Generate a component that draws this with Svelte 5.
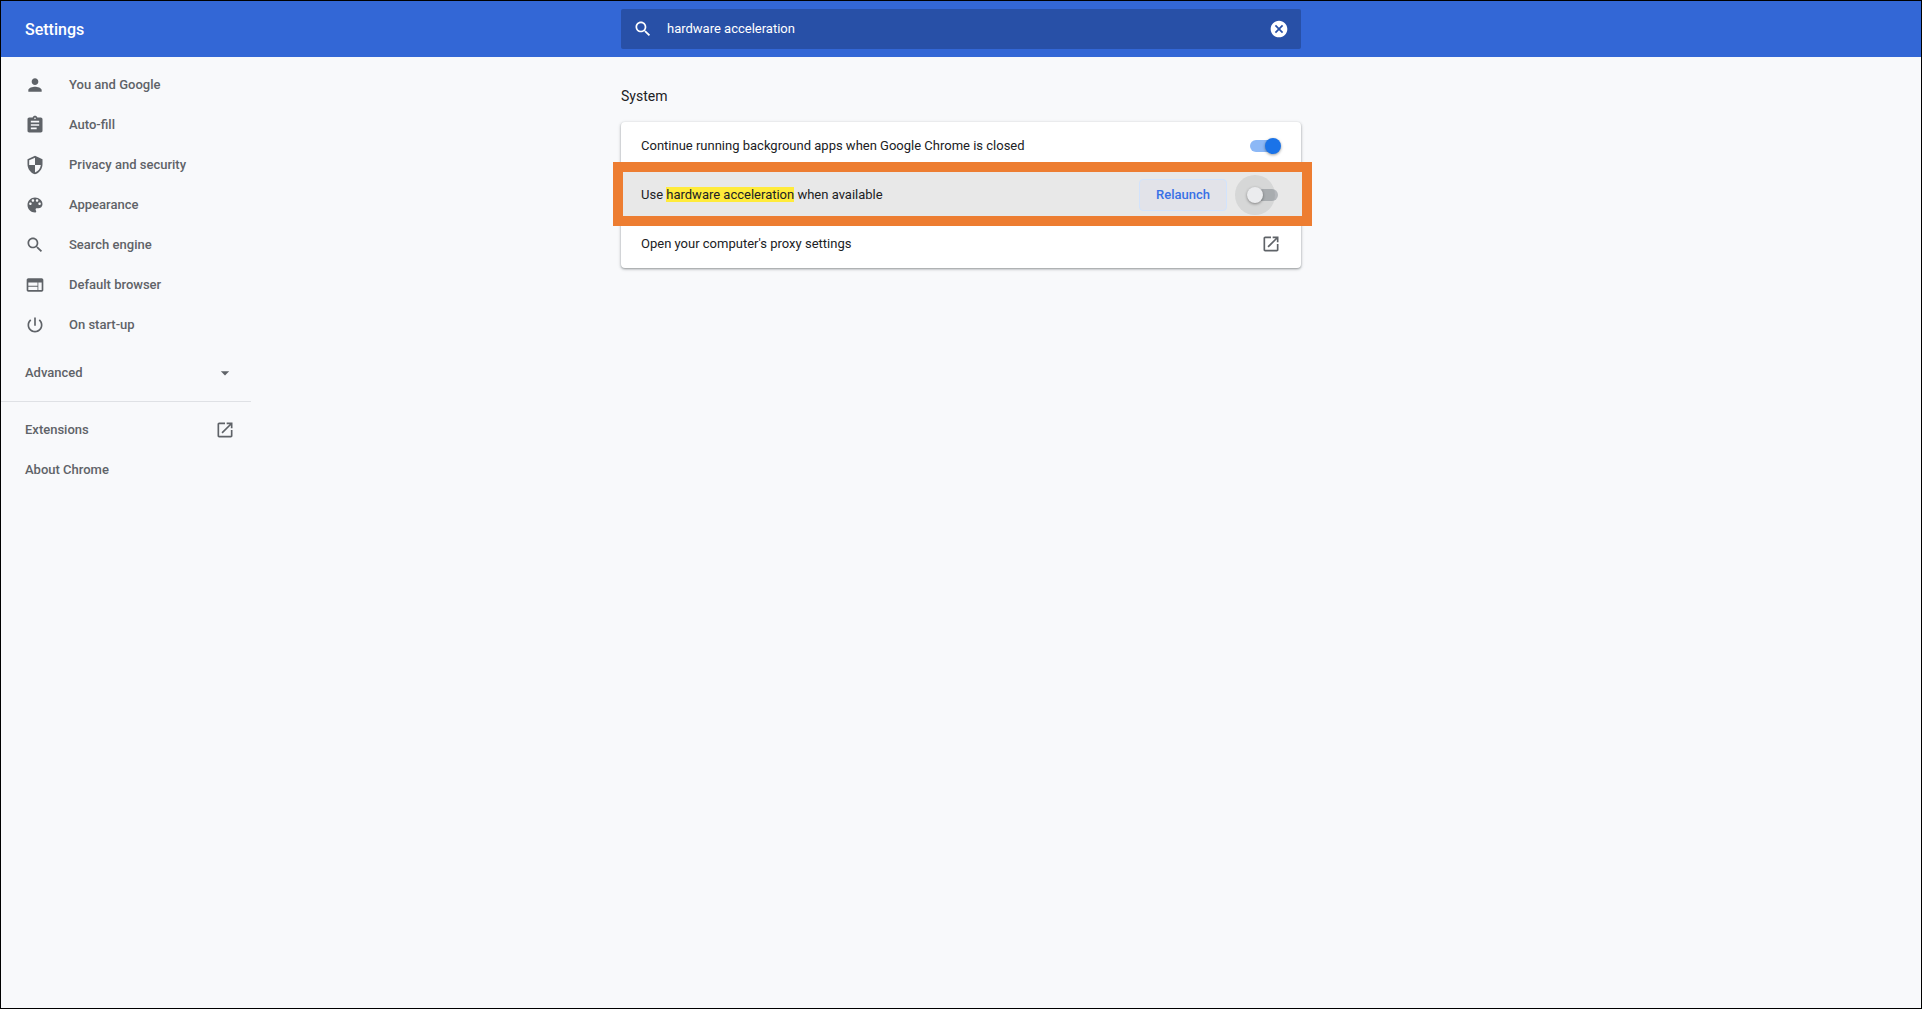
<script>
  const openPath =
    'M19 19H5V5h7V3H5c-1.11 0-2 .9-2 2v14c0 1.1.89 2 2 2h14c1.1 0 2-.9 2-2v-7h-2v7zM14 3v2h3.59l-9.83 9.83 1.41 1.41L19 6.41V10h2V3h-7z';
  const searchPath =
    'M15.5 14h-.79l-.28-.27C15.41 12.59 16 11.11 16 9.5 16 5.91 13.09 3 9.5 3S3 5.91 3 9.5 5.91 16 9.5 16c1.61 0 3.09-.59 4.23-1.57l.27.28v.79l5 4.99L20.49 19l-4.99-5zm-6 0C7.01 14 5 11.99 5 9.5S7.01 5 9.5 5 14 7.01 14 9.5 11.99 14 9.5 14z';

  const sections = [
    {
      label: 'You and Google',
      path: 'M12 12c2.21 0 4-1.79 4-4s-1.79-4-4-4-4 1.79-4 4 1.79 4 4 4zm0 2c-2.67 0-8 1.34-8 4v2h16v-2c0-2.66-5.33-4-8-4z'
    },
    {
      label: 'Auto-fill',
      path: 'M19 3h-4.18C14.4 1.84 13.3 1 12 1c-1.3 0-2.4.84-2.82 2H5c-1.1 0-2 .9-2 2v14c0 1.1.9 2 2 2h14c1.1 0 2-.9 2-2V5c0-1.1-.9-2-2-2zm-7 0c.55 0 1 .45 1 1s-.45 1-1 1-1-.45-1-1 .45-1 1-1zm2 14H7v-2h7v2zm3-4H7v-2h10v2zm0-4H7V7h10v2z'
    },
    {
      label: 'Privacy and security',
      path: 'M12 1L3 5v6c0 5.55 3.84 10.74 9 12 5.16-1.26 9-6.45 9-12V5l-9-4zm0 10.99h7c-.53 4.12-3.28 7.79-7 8.94V12H5V6.3l7-3.11v8.8z'
    },
    {
      label: 'Appearance',
      path: 'M12 3c-4.97 0-9 4.03-9 9s4.03 9 9 9c.83 0 1.5-.67 1.5-1.5 0-.39-.15-.74-.39-1.01-.23-.26-.38-.61-.38-.99 0-.83.67-1.5 1.5-1.5H16c2.76 0 5-2.24 5-5 0-4.42-4.03-8-9-8zm-5.5 9c-.83 0-1.5-.67-1.5-1.5S5.67 9 6.5 9 8 9.67 8 10.5 7.33 12 6.5 12zm3-4C8.67 8 8 7.33 8 6.5S8.67 5 9.5 5s1.5.67 1.5 1.5S10.33 8 9.5 8zm5 0c-.83 0-1.5-.67-1.5-1.5S13.67 5 14.5 5s1.5.67 1.5 1.5S15.33 8 14.5 8zm3 4c-.83 0-1.5-.67-1.5-1.5S16.67 9 17.5 9s1.5.67 1.5 1.5-.67 1.5-1.5 1.5z'
    },
    { label: 'Search engine', path: searchPath },
    {
      label: 'Default browser',
      path: 'M20 4H4c-1.1 0-1.99.9-1.99 2L2 18c0 1.1.9 2 2 2h16c1.1 0 2-.9 2-2V6c0-1.1-.9-2-2-2zm-5 14H4v-4h11v4zm0-5H4V9h11v4zm5 5h-4V9h4v9z'
    },
    {
      label: 'On start-up',
      path: 'M13 3h-2v10h2V3zm4.83 2.17l-1.42 1.42C17.99 7.86 19 9.81 19 12c0 3.87-3.13 7-7 7s-7-3.13-7-7c0-2.19 1.01-4.14 2.58-5.42L6.17 5.17C4.23 6.82 3 9.26 3 12c0 4.97 4.03 9 9 9s9-4.03 9-9c0-2.74-1.23-5.18-3.17-6.83z'
    }
  ];

  let query = $state('hardware acceleration');
  let background = $state(true);
  let acceleration = $state(false);
</script>

{#snippet icon(d)}
  <svg class="icon" viewBox="0 0 24 24" aria-hidden="true"><path {d} /></svg>
{/snippet}

<div class="page">
  <header class="columns toolbar">
    <h1>Settings</h1>
    <div class="search">
      {@render icon(searchPath)}
      <input type="text" aria-label="Search settings" bind:value={query} />
      <button type="button" class="plain" aria-label="Clear search" onclick={() => (query = '')}>
        {@render icon(
          'M12 2C6.47 2 2 6.47 2 12s4.47 10 10 10 10-4.47 10-10S17.53 2 12 2zm5 13.59L15.59 17 12 13.41 8.41 17 7 15.59 10.59 12 7 8.41 8.41 7 12 10.59 15.59 7 17 8.41 13.41 12 17 15.59z'
        )}
      </button>
    </div>
  </header>

  <div class="columns body">
    <nav>
      {#each sections as s}
        <a class="item" href="#settings">{@render icon(s.path)}<span>{s.label}</span></a>
      {/each}
      <button type="button" class="item advanced">
        <span>Advanced</span>{@render icon('M7 10l5 5 5-5z')}
      </button>
      <hr />
      <a class="item spread" href="#extensions"><span>Extensions</span>{@render icon(openPath)}</a>
      <a class="item" href="#about">About Chrome</a>
    </nav>

    <main>
      <h2>System</h2>
      <div class="card">
        <div class="row">
          <label for="background">Continue running background apps when Google Chrome is closed</label>
          <input id="background" class="toggle" type="checkbox" bind:checked={background} />
        </div>
        <div class="row marked">
          <div class="frame"></div>
          <label for="acceleration">Use <mark>hardware acceleration</mark> when available</label>
          <button type="button" class="relaunch">Relaunch</button>
          <input id="acceleration" class="toggle ripple" type="checkbox" bind:checked={acceleration} />
        </div>
        <div class="row">
          <span id="proxy" class="label">Open your computer's proxy settings</span>
          <button type="button" class="plain" aria-labelledby="proxy">{@render icon(openPath)}</button>
        </div>
      </div>
    </main>
  </div>
</div>

<style>
  :global(body) {
    margin: 0;
  }

  .page {
    box-sizing: border-box;
    min-height: 100vh;
    border: 1px solid #000;
    background: #f8f9fb;
    color: #202124;
    font: 13px/20px Roboto, 'Liberation Sans', sans-serif;
  }

  .columns {
    display: grid;
    grid-template-columns: minmax(250px, 1fr) minmax(0, 680px) minmax(0, 1fr);
  }

  .toolbar {
    height: 56px;
    align-items: center;
    background: #3367d6;
    color: #fff;
  }

  h1 {
    margin: 0;
    padding: 2px 0 0 24px;
    font-size: 16px;
    font-weight: 500;
  }

  .icon {
    display: block;
    flex: none;
    width: 20px;
    height: 20px;
    fill: currentColor;
  }

  .search {
    display: flex;
    align-items: center;
    height: 40px;
    box-sizing: border-box;
    padding: 0 12px;
    border-radius: 2px;
    background: #2850a7;
  }

  .search input {
    flex: 1;
    min-width: 0;
    margin: 0;
    padding: 0 14px;
    border: 0;
    outline: 0;
    background: none;
    color: inherit;
    font: inherit;
  }

  .plain {
    padding: 0;
    border: 0;
    background: none;
    color: inherit;
    cursor: pointer;
  }

  nav {
    width: 250px;
    padding-top: 8px;
    color: #5f6368;
    font-weight: 500;
  }

  .item {
    display: flex;
    align-items: center;
    gap: 24px;
    box-sizing: border-box;
    width: 100%;
    height: 40px;
    padding: 0 16px 0 24px;
    border: 0;
    background: none;
    color: inherit;
    font: inherit;
    text-decoration: none;
  }

  .advanced,
  .spread {
    justify-content: space-between;
  }

  .advanced {
    margin-top: 8px;
  }

  hr {
    height: 1px;
    margin: 8px 0;
    border: 0;
    background: #dfe1e5;
  }

  h2 {
    margin: 29px 0 16px;
    font-size: 14px;
    font-weight: 400;
  }

  .card {
    border-radius: 4px;
    background: #fff;
    box-shadow: 0 1px 2px rgba(60, 64, 67, 0.4), 0 1px 3px 1px rgba(60, 64, 67, 0.15);
  }

  .row {
    display: flex;
    align-items: center;
    height: 48px;
    padding: 0 20px;
  }

  .row + .row {
    border-top: 1px solid #e8eaed;
  }

  .row > .plain {
    color: #5f6368;
  }

  label,
  .label {
    flex: 1;
  }

  .marked {
    position: relative;
  }

  .marked > :not(.frame) {
    position: relative;
  }

  .frame {
    position: absolute;
    top: -9px;
    right: -11px;
    bottom: -7px;
    left: -8px;
    border: 10px solid #ed7d31;
    background: #e8e8e8;
  }

  mark {
    background: #ffeb3b;
    color: inherit;
  }

  .relaunch {
    width: 88px;
    height: 32px;
    margin-right: 23px;
    padding: 0;
    border: 1px solid #d2e3fc;
    border-radius: 4px;
    background: #e2e3e9;
    color: #3871e6;
    font: inherit;
    font-weight: 500;
  }

  .toggle {
    appearance: none;
    position: relative;
    width: 28px;
    height: 12px;
    margin: 0 3px 0 0;
    border-radius: 6px;
    background: #b4b7bb;
  }

  .toggle:checked {
    background: #8cb8f6;
  }

  .toggle::after {
    content: '';
    position: absolute;
    top: -2px;
    left: -3px;
    width: 16px;
    height: 16px;
    border-radius: 50%;
    background: #ebecee;
    box-shadow: 0 1px 3px rgba(0, 0, 0, 0.4);
  }

  .toggle:checked::after {
    left: 15px;
    background: #1a73e8;
  }

  .ripple::before {
    content: '';
    position: absolute;
    top: -14px;
    left: -15px;
    width: 40px;
    height: 40px;
    border-radius: 50%;
    background: rgba(95, 99, 104, 0.13);
  }
</style>
